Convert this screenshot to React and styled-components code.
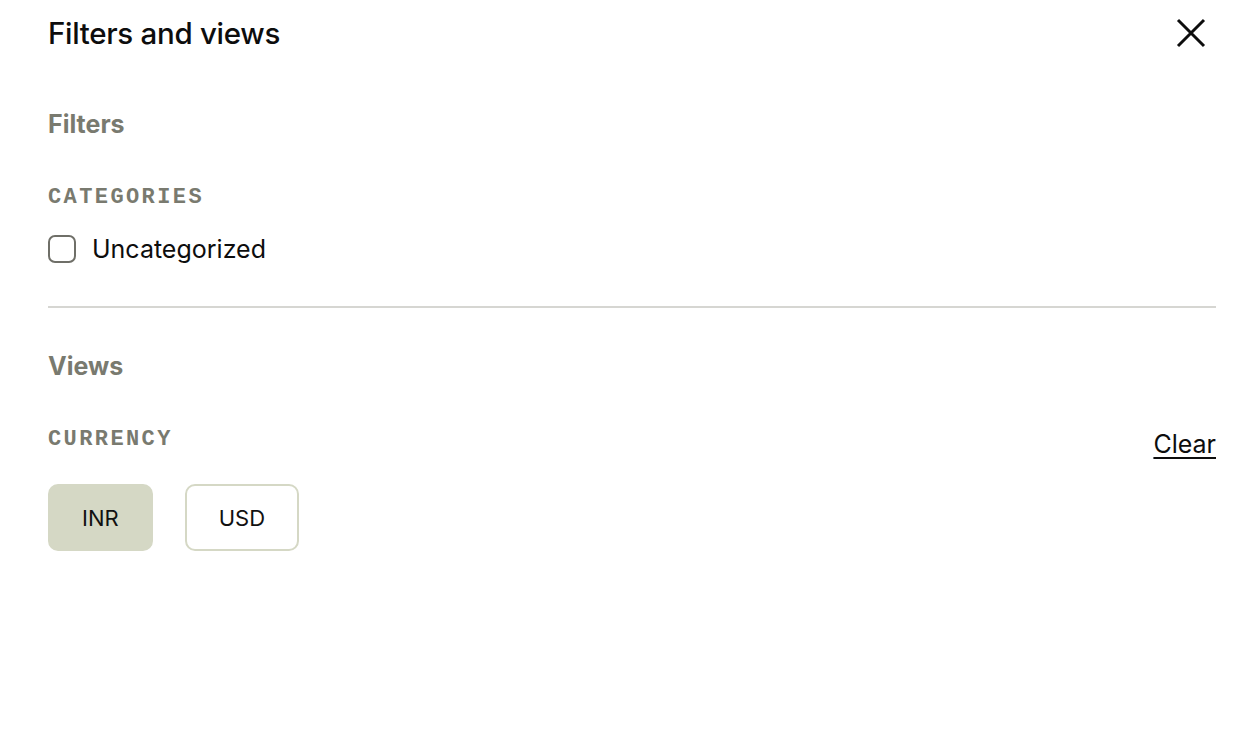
import React, { useState } from 'react';
import styled, { createGlobalStyle } from 'styled-components';

const GlobalStyle = createGlobalStyle`
    body {
        margin: 0;
        background: #ffffff;
        font-family: Inter, 'Liberation Sans', sans-serif;
        color: #111111;
    }
`;

const Panel = styled.div`
    padding: 0 30px 0 48px;
    `;

const Header = styled.div`
    height: 66px;
    display: flex;
    align-items: center;
    justify-content: space-between;
    `;

const Title = styled.h1`
    margin: 0;
    font-size: 29.5px;
    font-weight: 500;
    letter-spacing: -0.3px;
    color: #0d0d0d;
    `;

const CloseButton = styled.button`
    border: none;
    background: none;
    padding: 0;
    margin-right: 10px;
    width: 30px;
    height: 30px;
    display: flex;
    align-items: center;
    justify-content: center;
    cursor: pointer;
    `;

const SectionTitle = styled.h2`
    margin: ${props => props.top}px 0 0;
    font-size: 25px;
    line-height: 30px;
    font-weight: 700;
    color: #797a6f;
    `;

const GroupRow = styled.div`
    margin-top: 45px;
    display: flex;
    justify-content: space-between;
    align-items: flex-start;
    `;

const GroupLabel = styled.div`
    font-family: 'Liberation Mono', 'DejaVu Sans Mono', monospace;
    font-weight: 700;
    font-size: 22px;
    line-height: 28px;
    letter-spacing: 2.4px;
    color: #797a6f;
    `;

const ClearLink = styled.a`
    margin-top: 4px;
    font-size: 25px;
    line-height: 28px;
    color: #0d0d0d;
    text-decoration: underline;
    text-underline-offset: 4px;
    cursor: pointer;
    `;

const CheckRow = styled.label`
    margin-top: 23px;
    height: 28px;
    display: flex;
    align-items: center;
    gap: 16px;
    font-size: 25px;
    color: #0d0d0d;
    cursor: pointer;
    `;

const Box = styled.span`
    width: 24px;
    height: 24px;
    border: 2px solid #6f6f68;
    border-radius: 7px;
    background: ${props => props.checked ? '#6f6f68' : '#fff'};
    `;

const Divider = styled.hr`
    margin: 43px 0 0;
    border: none;
    height: 2px;
    background: #d6d6d2;
    `;

const Options = styled.div`
    margin-top: 26px;
    display: flex;
    gap: 32px;
    `;

const Option = styled.button`
    height: 67px;
    padding: 0 ${props => props.wide}px;
    border-radius: 10px;
    border: 2px solid #d5d8c5;
    background: ${props => props.selected ? '#d5d8c5' : '#ffffff'};
    font-family: Inter, 'Liberation Sans', sans-serif;
    font-size: 22px;
    color: #111111;
    cursor: pointer;
    `;

const App = () => {
    const [checked, setChecked] = useState(false);
    const [currency, setCurrency] = useState('INR');

    return (
        <Panel>
            <GlobalStyle />
            <Header>
                <Title>Filters and views</Title>
                <CloseButton aria-label="Close">
                    <svg width="30" height="30" viewBox="0 0 30 30">
                        <path d="M2 2 L28 28 M28 2 L2 28" stroke="#0d0d0d" strokeWidth="3" strokeLinecap="butt" />
                    </svg>
                </CloseButton>
            </Header>

            <SectionTitle top={43}>Filters</SectionTitle>
            <GroupRow>
                <GroupLabel>CATEGORIES</GroupLabel>
            </GroupRow>
            <CheckRow onClick={() => setChecked(!checked)}>
                <Box checked={checked} />
                Uncategorized
            </CheckRow>

            <Divider />

            <SectionTitle top={43}>Views</SectionTitle>
            <GroupRow>
                <GroupLabel>CURRENCY</GroupLabel>
                <ClearLink onClick={() => setCurrency(null)}>Clear</ClearLink>
            </GroupRow>
            <Options>
                {['INR', 'USD'].map(c => (
                    <Option key={c} wide={32} selected={currency === c} onClick={() => setCurrency(c)}>{c}</Option>
                ))}
            </Options>
        </Panel>
    );
}

export default App;
